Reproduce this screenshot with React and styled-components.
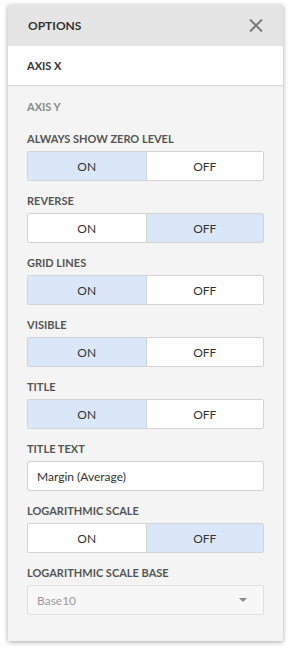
import React, { useState } from 'react'
import styled, { createGlobalStyle } from 'styled-components'

const GlobalStyle = createGlobalStyle`
	html, body {
		margin: 0;
		padding: 0;
		background: #ffffff;
		font-family: Lato, "Open Sans", sans-serif;
	}
`

const items = [
	{ type: 'toggle', label: 'Always show zero level', value: 'on' },
	{ type: 'toggle', label: 'Reverse', value: 'off' },
	{ type: 'toggle', label: 'Grid lines', value: 'on' },
	{ type: 'toggle', label: 'Visible', value: 'on' },
	{ type: 'toggle', label: 'Title', value: 'on' },
	{ type: 'text', label: 'Title text', value: 'Margin (Average)' },
	{ type: 'toggle', label: 'Logarithmic scale', value: 'off' },
	{ type: 'select', label: 'Logarithmic scale base', value: 'Base10' },
]

const Toggle = ({ initial }) => {
	const [value, setValue] = useState(initial)
	return (
		<ButtonGroup>
			<ToggleButton active={value === 'on'} onClick={() => setValue('on')}>ON</ToggleButton>
			<ToggleButton active={value === 'off'} onClick={() => setValue('off')}>OFF</ToggleButton>
		</ButtonGroup>
	)
}

export default function App() {
	const [title, setTitle] = useState('Margin (Average)')

	return (
		<Page>
			<GlobalStyle />
			<Panel>
				<Header>
					<HeaderTitle>OPTIONS</HeaderTitle>
					<CloseButton aria-label='close'>
						<svg width='14' height='13' viewBox='0 0 14 13'>
							<path d='M1 0.5 L13 12.5 M13 0.5 L1 12.5' stroke='#7a7a7a' strokeWidth='2' fill='none' />
						</svg>
					</CloseButton>
				</Header>
				<Tab>AXIS X</Tab>
				<Body>
					<SectionTitle>AXIS Y</SectionTitle>
					{items.map(item => (
						<Field key={item.label}>
							<Label>{item.label}</Label>
							{item.type === 'toggle' && <Toggle initial={item.value} />}
							{item.type === 'text' && (
								<TextInput value={title} onChange={e => setTitle(e.currentTarget.value)} />
							)}
							{item.type === 'select' && (
								<Select>
									<span>{item.value}</span>
									<Arrow />
								</Select>
							)}
						</Field>
					))}
				</Body>
			</Panel>
		</Page>
	)
}

const Page = styled.div`
	padding: 5px 13px 16px 8px;
`

const Panel = styled.div`
	width: 275px;
	background: #f4f4f4;
	box-shadow: 0 1px 5px rgba(0, 0, 0, 0.35);
`

const Header = styled.div`
	height: 41px;
	background: #e5e5e5;
	display: flex;
	align-items: center;
	justify-content: space-between;
	padding: 0 20px 0 20px;
	box-sizing: border-box;
`

const HeaderTitle = styled.div`
	font-size: 12px;
	font-weight: 700;
	color: #333333;
`

const CloseButton = styled.div`
	display: flex;
	align-items: center;
	cursor: pointer;
`

const Tab = styled.div`
	height: 40px;
	background: #ffffff;
	border-bottom: 1px solid #d6d6d6;
	box-sizing: border-box;
	display: flex;
	align-items: center;
	padding-left: 19px;
	font-size: 11px;
	font-weight: 700;
	color: #333333;
`

const Body = styled.div`
	padding: 14px 19px 26px 19px;
`

const SectionTitle = styled.div`
	font-size: 11px;
	font-weight: 700;
	color: #8a8a8a;
	line-height: 14px;
	margin-bottom: 18px;
`

const Field = styled.div`
	display: flex;
	flex-direction: column;
	margin-bottom: 13px;
	&:last-child {
		margin-bottom: 0;
	}
`

const Label = styled.div`
	font-size: 11px;
	font-weight: 700;
	text-transform: uppercase;
	color: #555555;
	line-height: 14px;
	margin-bottom: 5px;
`

const ButtonGroup = styled.div`
	display: grid;
	grid-template-columns: 1fr 1fr;
	height: 30px;
	border: 1px solid #d3d3d3;
	border-radius: 2px;
	box-sizing: border-box;
	overflow: hidden;
	background: #ffffff;
`

const ToggleButton = styled.div`
	display: flex;
	align-items: center;
	justify-content: center;
	font-size: 12px;
	color: #333333;
	cursor: pointer;
	background: ${p => (p.active ? '#d9e7f9' : '#ffffff')};
	& + & {
		border-left: 1px solid #d3d3d3;
	}
`

const TextInput = styled.input`
	height: 30px;
	box-sizing: border-box;
	border: 1px solid #d3d3d3;
	border-radius: 2px;
	padding: 0 9px;
	font-family: inherit;
	font-size: 12px;
	color: #333333;
	background: #ffffff;
	outline: none;
`

const Select = styled.div`
	height: 30px;
	box-sizing: border-box;
	border: 1px solid #dedede;
	border-radius: 2px;
	padding: 0 16px 0 9px;
	display: flex;
	align-items: center;
	justify-content: space-between;
	font-size: 12px;
	color: #9a9a9a;
	background: #f7f7f7;
`

const Arrow = styled.span`
	width: 0;
	height: 0;
	border-left: 4px solid transparent;
	border-right: 4px solid transparent;
	border-top: 4px solid #8a8a8a;
`
